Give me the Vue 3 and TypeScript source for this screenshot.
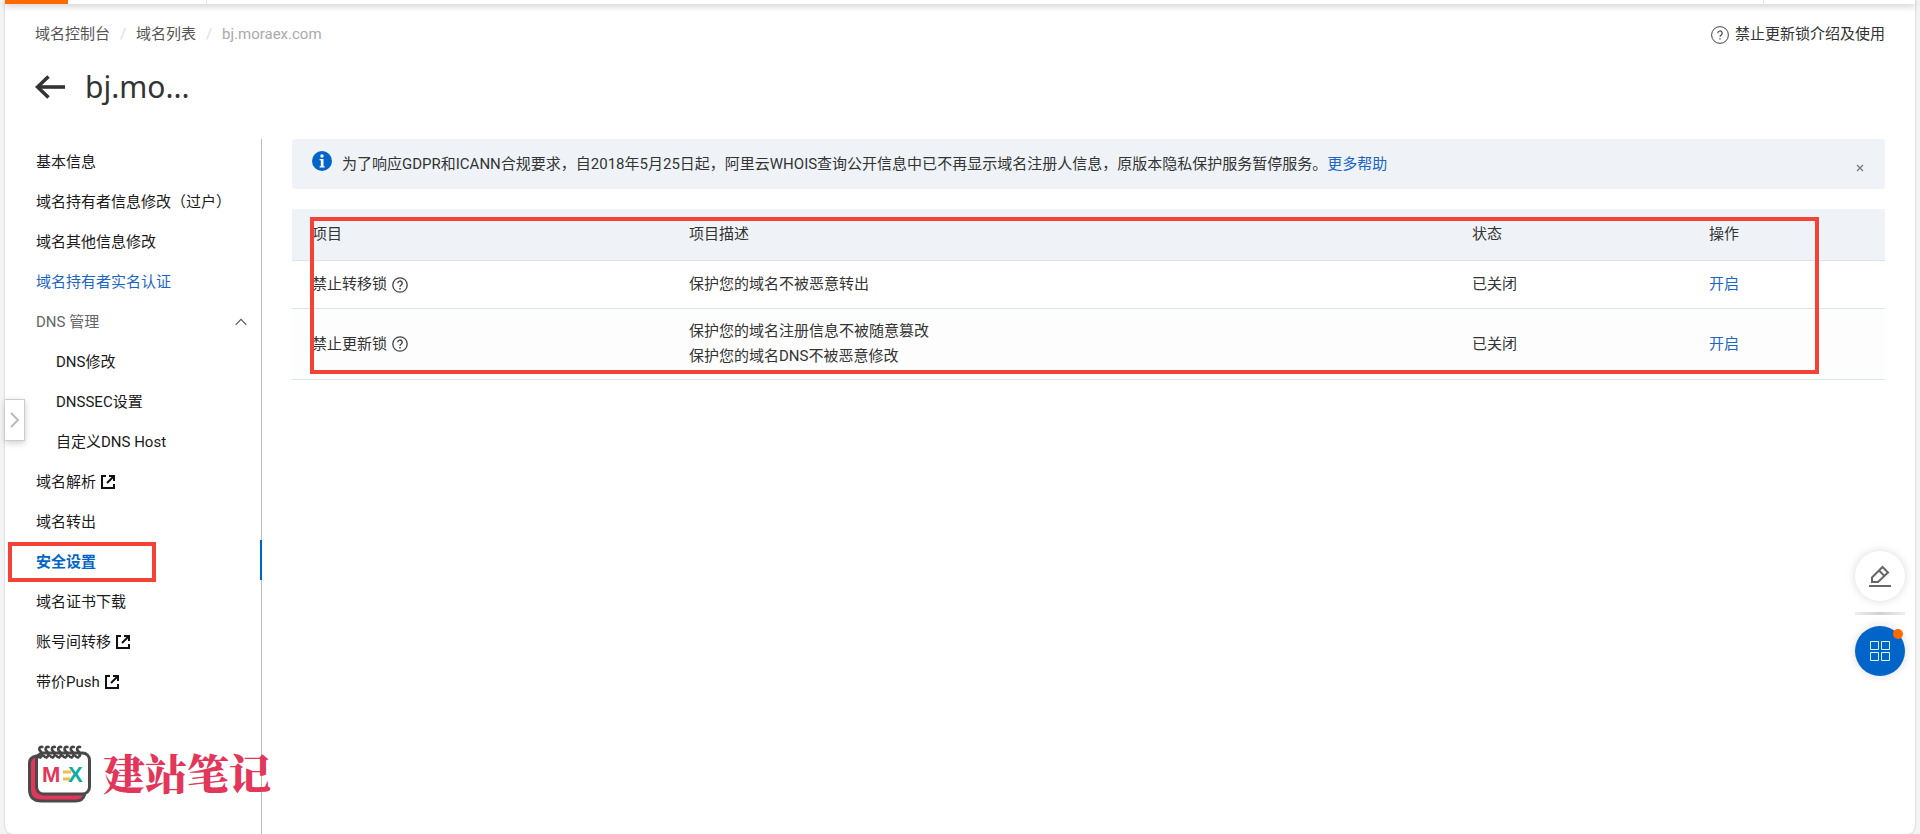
<script setup lang="ts">
interface MenuItem {
  label: string
  kind?: 'link' | 'group' | 'sub' | 'active'
  external?: boolean
}

interface LockRow {
  name: string
  description: string[]
  status: string
}

const menu: MenuItem[] = [
  { label: '基本信息' },
  { label: '域名持有者信息修改（过户）' },
  { label: '域名其他信息修改' },
  { label: '域名持有者实名认证', kind: 'link' },
  { label: 'DNS 管理', kind: 'group' },
  { label: 'DNS修改', kind: 'sub' },
  { label: 'DNSSEC设置', kind: 'sub' },
  { label: '自定义DNS Host', kind: 'sub' },
  { label: '域名解析', external: true },
  { label: '域名转出' },
  { label: '安全设置', kind: 'active' },
  { label: '域名证书下载' },
  { label: '账号间转移', external: true },
  { label: '带价Push', external: true },
]

const rows: LockRow[] = [
  { name: '禁止转移锁', description: ['保护您的域名不被恶意转出'], status: '已关闭' },
  {
    name: '禁止更新锁',
    description: ['保护您的域名注册信息不被随意篡改', '保护您的域名DNS不被恶意修改'],
    status: '已关闭',
  },
]
</script>

<template>
  <div class="page">
    <div class="topbar">
      <span class="topbar-accent"></span>
      <span class="topbar-left"></span>
      <span class="topbar-mid"></span>
    </div>

    <header class="header">
      <div class="header-row">
        <nav class="crumbs" aria-label="面包屑">
          <a href="#">域名控制台</a>
          <span class="slash">/</span>
          <a href="#">域名列表</a>
          <span class="slash">/</span>
          <span class="current">bj.moraex.com</span>
        </nav>
        <a class="doc-link" href="#">
          <svg width="18" height="18" viewBox="0 0 18 18" fill="none" stroke="#444" aria-hidden="true">
            <circle cx="9" cy="9" r="8.4" />
            <path d="M6.8 7.2a2.2 2.2 0 1 1 3.3 1.9c-.8.4-1.1.8-1.1 1.7" stroke-width="1.2" />
            <path d="M9 12.2v1.3" stroke-width="1.3" />
          </svg>
          <span>禁止更新锁介绍及使用</span>
        </a>
      </div>
      <div class="title-row">
        <button class="back" type="button" aria-label="返回">
          <svg width="30" height="24" viewBox="0 0 30 24" fill="none" stroke="#333" stroke-width="3.6">
            <path d="M30 12H3" />
            <path d="M13.500 1.500 2.500 12l11 10.500" />
          </svg>
        </button>
        <h1>bj.mo...</h1>
      </div>
    </header>

    <div class="body">
      <aside class="sidebar">
        <ul>
          <li v-for="item in menu" :key="item.label" :class="item.kind">
            <button v-if="item.kind === 'group'" class="entry" type="button" aria-expanded="true">
              <span>{{ item.label }}</span>
              <svg class="chevron" width="12" height="8" viewBox="0 0 12 8" fill="none" stroke="#555" stroke-width="1.200">
                <path d="M.7 6.800 6 1.300l5.300 5.500" />
              </svg>
            </button>
            <a v-else class="entry" href="#">
              <span>{{ item.label }}</span>
              <svg v-if="item.external" class="external" width="14" height="14" viewBox="0 0 14 14" fill="none" stroke="#111" stroke-width="2">
                <path d="M5 1H1v12h12V9" />
                <path d="M8 1h5v5" />
                <path d="M12.500 1.500 6 8" />
              </svg>
            </a>
          </li>
        </ul>
      </aside>

      <main class="content">
        <div class="notice" role="status">
          <svg class="info" width="20" height="20" viewBox="0 0 20 20" aria-hidden="true">
            <circle cx="10" cy="10" r="10" fill="#0064c8" />
            <circle cx="10" cy="5" r="1.7" fill="#fff" />
            <path d="M7.600 8h3.900v7.200h1.200v1.200H7.600v-1.200h1.200V9.200H7.600z" fill="#fff" />
          </svg>
          <p>
            为了响应GDPR和ICANN合规要求，自2018年5月25日起，阿里云WHOIS查询公开信息中已不再显示域名注册人信息，原版本隐私保护服务暂停服务。<a href="#">更多帮助</a>
          </p>
          <button class="close" type="button" aria-label="关闭">
            <svg width="8" height="8" viewBox="0 0 8 8" stroke="#777" stroke-width="1.300">
              <path d="m1 1 6 6M7 1 1 7" />
            </svg>
          </button>
        </div>

        <div class="table-wrap">
          <table>
            <colgroup>
              <col class="c-name" />
              <col class="c-desc" />
              <col class="c-status" />
              <col class="c-action" />
            </colgroup>
            <thead>
              <tr>
                <th scope="col">项目</th>
                <th scope="col">项目描述</th>
                <th scope="col">状态</th>
                <th scope="col">操作</th>
              </tr>
            </thead>
            <tbody>
              <tr v-for="row in rows" :key="row.name">
                <td>
                  <span class="lock">
                    {{ row.name }}
                    <svg width="16" height="16" viewBox="0 0 16 16" fill="none" stroke="#444" stroke-width="1.300" aria-hidden="true">
                      <circle cx="8" cy="8" r="7.200" />
                      <path d="M5.800 6.300a2.200 2.200 0 1 1 3.300 1.900C8.300 8.600 8 9 8 9.800" stroke-width="1.500" />
                      <path d="M8 10.900v1.500" stroke-width="1.600" />
                    </svg>
                  </span>
                </td>
                <td>
                  <div v-for="line in row.description" :key="line">{{ line }}</div>
                </td>
                <td>{{ row.status }}</td>
                <td><a href="#">开启</a></td>
              </tr>
            </tbody>
          </table>
          <div class="mark mark-table"></div>
        </div>
      </main>
    </div>

    <button class="drawer" type="button" aria-label="展开">
      <svg width="10" height="16" viewBox="0 0 10 16" fill="none" stroke="#bbb" stroke-width="2">
        <path d="m1 1 7 7-7 7" />
      </svg>
    </button>
    <div class="mark mark-menu"></div>

    <div class="brand">
      <svg width="64" height="58" viewBox="0 0 64 58" aria-hidden="true">
        <path d="M8 11C3.500 12 1.500 14 1.500 18v26c0 8 4 12 12 12h34c5 0 8-2 9-6V20z" fill="#e2365a" stroke="#4a4a4a" stroke-width="3" />
        <rect x="8.500" y="8" width="53" height="41" rx="7" fill="#fff" stroke="#4a4a4a" stroke-width="3" />
        <g fill="none" stroke="#444" stroke-width="2.600" stroke-linecap="round">
          <path v-for="n in 7" :key="n" :d="`M${8 + n * 6.300} 2c-3-.5-4 2-2 4s3 4 0 6.500m-2.500-1.500c1 2 4 1.500 4.500-1`" />
        </g>
        <text x="14" y="37" class="logo-letter" fill="#e2365a">M</text>
        <path d="M35 27h8M35 34h7" stroke="#f0bd45" stroke-width="3" />
        <text x="40" y="37" class="logo-letter" fill="#10aaa5">X</text>
      </svg>
      <span>建站笔记</span>
    </div>

    <div class="float">
      <button class="fab fab-edit" type="button" aria-label="反馈">
        <svg width="22" height="22" viewBox="0 0 22 22" fill="none" stroke="#666" stroke-width="2">
          <path d="M0 21h22" />
          <path d="M3 17v-4.500L13.500 2 19 7.500 9 17z" />
          <path d="m10 5.500 5.500 5.500" />
        </svg>
      </button>
      <span class="float-line"></span>
      <button class="fab fab-apps" type="button" aria-label="应用">
        <svg width="20" height="20" viewBox="0 0 20 20" fill="none" stroke="#d8fbff">
          <path d="M.5.5h8v8h-8zM11.500.5h8v8h-8zM.5 11.500h8v8h-8zM11.500 11.500h8v8h-8z" />
        </svg>
        <span class="dot"></span>
      </button>
    </div>
  </div>
</template>

<style>
body {
  margin: 0;
  background: #f4f4f5;
}
</style>

<style scoped>
.page {
  position: relative;
  box-sizing: border-box;
  display: flex;
  flex-direction: column;
  min-height: 100vh;
  margin: 0 5px;
  background: #fff;
  border-radius: 0 0 8px 8px;
  box-shadow: 0 0 2px rgba(0, 0, 0, 0.28);
  color: #333;
  font: 15px/25px Roboto, "Noto Sans CJK SC", sans-serif;
}

a {
  color: inherit;
  text-decoration: none;
}

button {
  padding: 0;
  border: 0;
  background: none;
  color: inherit;
  font: inherit;
  cursor: pointer;
}

svg {
  display: block;
  flex: none;
}

.topbar {
  display: flex;
  height: 4px;
  box-shadow: 0 2px 6px rgba(0, 0, 0, 0.25);
}

.topbar-accent {
  width: 63px;
  background: #ff6a00;
}

.topbar-left {
  width: 138px;
  border-right: 1px solid #e5e5e5;
}

.topbar-mid {
  flex: 1;
  margin-right: 151px;
  border-right: 1px solid #e5e5e5;
}

.header {
  display: flex;
  flex-direction: column;
  gap: 17px;
  height: 135px;
  box-sizing: border-box;
  padding: 18px 30px 0;
}

.header-row {
  display: flex;
  justify-content: space-between;
}

.crumbs {
  display: flex;
  color: #555;
}

.slash {
  width: 26px;
  text-align: center;
  color: #ddd;
}

.current {
  color: #aaa;
}

.doc-link {
  display: flex;
  align-items: center;
  gap: 6px;
}

.title-row {
  display: flex;
  align-items: center;
  gap: 20px;
}

h1 {
  margin: 0;
  font-family: "Noto Sans", "Noto Sans CJK SC", sans-serif;
  font-size: 30px;
  line-height: 46px;
  font-weight: 400;
}

.body {
  display: flex;
  flex: 1;
}

.sidebar {
  width: 256px;
  flex: none;
  border-right: 1px solid #bbb;
  color: #1a1a1a;
}

.sidebar ul {
  margin: 0;
  padding: 1px 0 0;
  list-style: none;
}

.sidebar li {
  height: 40px;
  margin-right: -1px;
}

.entry {
  display: flex;
  align-items: center;
  gap: 5px;
  box-sizing: border-box;
  width: 100%;
  height: 40px;
  padding: 4px 15px 0 31px;
}

.sub .entry {
  padding-left: 51px;
}

.link {
  color: #1a66c4;
}

.group {
  color: #666;
}

.group .entry {
  justify-content: space-between;
}

.active {
  border-right: 2px solid #0064c8;
  color: #0064c8;
  font-weight: 700;
}

.content {
  flex: 1;
  min-width: 0;
  padding: 0 30px;
}

.notice {
  display: flex;
  align-items: center;
  gap: 10px;
  height: 50px;
  padding: 0 21px 0 20px;
  border-radius: 3px;
  background: #eff3f8;
}

.notice p {
  flex: 1;
  margin: 0;
  white-space: nowrap;
}

.notice .info {
  align-self: flex-start;
  margin-top: 12px;
}

.notice a,
td a {
  color: #1a66c4;
}

.close {
  margin-top: 8px;
}

.table-wrap {
  position: relative;
  margin-top: 20px;
}

table {
  width: 100%;
  border-collapse: collapse;
  table-layout: fixed;
}

.c-name {
  width: 377px;
}

.c-status {
  width: 237px;
}

.c-action {
  width: 196px;
}

th,
td {
  padding: 11px 0 11px 20px;
  border-bottom: 1px solid #dfe3e8;
  text-align: left;
  font-weight: 400;
}

th {
  padding: 13px 0 13px 20px;
  background: #eff3f8;
}

tbody tr:last-child td {
  padding: 10px 0 10px 20px;
  background: #fdfdfd;
}

.lock {
  display: flex;
  align-items: center;
  gap: 5px;
}

.mark {
  position: absolute;
  box-sizing: border-box;
  border: 4px solid #f44336;
  pointer-events: none;
}

.mark-table {
  top: 8px;
  right: 66px;
  bottom: 6px;
  left: 18px;
}

.mark-menu {
  top: 542px;
  left: 3px;
  width: 148px;
  height: 40px;
}

.drawer {
  position: absolute;
  top: 399px;
  left: 0;
  display: flex;
  align-items: center;
  box-sizing: border-box;
  width: 20px;
  height: 42px;
  padding-left: 5px;
  border: 1px solid #ccc;
  border-left: 0;
  background: #fff;
  box-shadow: 0 2px 6px rgba(0, 0, 0, 0.2);
}

.brand {
  position: absolute;
  top: 745px;
  left: 23px;
  display: flex;
  align-items: flex-start;
  gap: 11px;
  color: #e2365a;
  font: 900 42px/54px "Noto Serif CJK SC", "Noto Serif SC", "Noto Sans CJK SC", serif;
}

.logo-letter {
  font: 700 22px "Liberation Sans", sans-serif;
}

.float {
  position: fixed;
  top: 551px;
  right: 15px;
  display: flex;
  flex-direction: column;
  align-items: center;
  gap: 11px;
}

.float-line {
  width: 50px;
  height: 3px;
  background: linear-gradient(90deg, #eee, #d0d0d8, #eee);
}

.fab {
  position: relative;
  display: flex;
  align-items: center;
  justify-content: center;
  width: 50px;
  height: 50px;
  border-radius: 50%;
  background: #fff;
  box-shadow: 0 0 10px rgba(0, 0, 0, 0.15);
}

.fab-apps {
  background: #0064c8;
}

.dot {
  position: absolute;
  top: 3px;
  right: 2px;
  width: 10px;
  height: 10px;
  border-radius: 50%;
  background: #ff6a00;
}
</style>
